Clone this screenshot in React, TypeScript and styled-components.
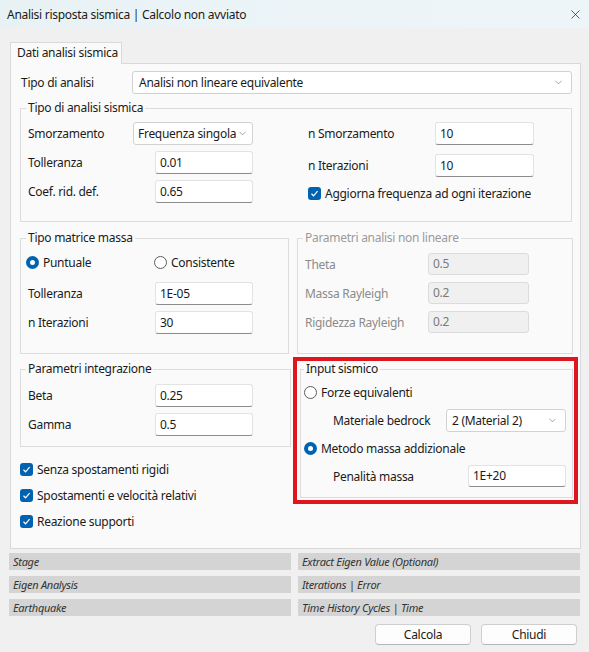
import React from 'react'
import styled, { createGlobalStyle } from 'styled-components'
import { ChevronDown, X } from 'lucide-react'

const GlobalStyle = createGlobalStyle`
    html, body {
        margin: 0;
        padding: 0;
    }
    body {
        font-family: "Noto Sans", "Open Sans", sans-serif;
        font-size: 12px;
        letter-spacing: -0.28px;
        color: #1b1b1b;
    }
    * {
        box-sizing: border-box;
    }
`

const Window = styled.div`
    width: 589px;
    height: 652px;
    background: #f0f0f0;
    display: flex;
    flex-direction: column;
    overflow: hidden;
`

const TitleBar = styled.div`
    height: 28px;
    flex: none;
    display: flex;
    align-items: center;
    justify-content: space-between;
    padding: 0 6px 0 7px;
    background: linear-gradient(90deg, #e8f2f5, #eef5f9);
    color: #1a1a1a;
`

const Body = styled.div`
    padding: 14px 0 0 10px;
    display: flex;
    flex-direction: column;
`

const Tab = styled.div`
    width: 112px;
    height: 22px;
    margin-bottom: -1px;
    position: relative;
    z-index: 1;
    border: 1px solid #d9d9d9;
    border-bottom: none;
    background: #fafafa;
    padding-left: 6px;
    line-height: 20px;
    white-space: nowrap;
`

const Panel = styled.div`
    width: 571px;
    height: 486px;
    border: 1px solid #d9d9d9;
    background: #fafafa;
    padding: 7px 8px 0 9px;
    display: flex;
    flex-direction: column;
`

const Row = styled.div<{ $mt?: number; $ml?: number }>`
    display: flex;
    align-items: center;
    margin-top: ${({ $mt }) => $mt ?? 0}px;
    margin-left: ${({ $ml }) => $ml ?? 0}px;
`

const Label = styled.div<{ $w: number; $disabled?: boolean }>`
    width: ${({ $w }) => $w}px;
    flex: none;
    color: ${({ $disabled }) => ($disabled ? '#8a8a8a' : '#1b1b1b')};
    white-space: nowrap;
`

const Input = styled.div<{ $w: number; $h?: number; $disabled?: boolean }>`
    width: ${({ $w }) => $w}px;
    height: ${({ $h }) => $h ?? 23}px;
    flex: none;
    display: flex;
    align-items: center;
    padding: 0 4px 1px;
    border: 1px solid ${({ $disabled }) => ($disabled ? '#dcdcdc' : '#e3e3e3')};
    border-bottom-color: ${({ $disabled }) => ($disabled ? '#dcdcdc' : '#8c8c8c')};
    border-radius: 3px;
    background: ${({ $disabled }) => ($disabled ? '#f0f0f0' : '#ffffff')};
    color: ${({ $disabled }) => ($disabled ? '#7a7a7a' : '#1b1b1b')};
`

const Combo = styled.div<{ $w?: number }>`
    width: ${({ $w }) => ($w ? `${$w}px` : 'auto')};
    flex: ${({ $w }) => ($w ? 'none' : '1')};
    height: 23px;
    display: flex;
    align-items: center;
    justify-content: space-between;
    padding: 0 4px 0 4px;
    border: 1px solid #d2d2d2;
    border-radius: 3px;
    background: #ffffff;
    white-space: nowrap;
    color: #1b1b1b;

    svg {
        flex: none;
    }
`

const Group = styled.fieldset<{ $pt: number; $pb: number; $pl?: number; $disabled?: boolean }>`
    margin: 0;
    min-width: 0;
    border: 1px solid #dcdcdc;
    padding: ${({ $pt, $pb, $pl }) => `${$pt}px 6px ${$pb}px ${$pl ?? 7}px`};
    display: flex;
    flex-direction: column;

    legend {
        padding: 0 2px;
        margin-left: -2px;
        line-height: 16px;
        color: ${({ $disabled }) => ($disabled ? '#9a9a9a' : '#1b1b1b')};
    }
`

const TwoCols = styled.div`
    display: grid;
    grid-template-columns: 280px 1fr;
`

const Col = styled.div<{ $mt?: number }>`
    display: flex;
    flex-direction: column;
    margin-top: ${({ $mt }) => $mt ?? 0}px;
`

const GroupRow = styled.div<{ $cols: string; $gap: number; $mt: number }>`
    display: grid;
    grid-template-columns: ${({ $cols }) => $cols};
    column-gap: ${({ $gap }) => $gap}px;
    margin-top: ${({ $mt }) => $mt}px;
    align-items: start;
`

const RadioRow = styled.div`
    display: grid;
    grid-template-columns: 128px auto;
    margin-left: -2px;
`

const Option = styled.div<{ $mt?: number }>`
    display: flex;
    align-items: center;
    height: 16px;
    gap: 4px;
    margin-top: ${({ $mt }) => $mt ?? 0}px;
    white-space: nowrap;
`

const RadioDot = styled.span<{ $on?: boolean }>`
    width: 13px;
    height: 13px;
    border-radius: 50%;
    flex: none;
    border: ${({ $on }) => ($on ? '4px solid #0063b1' : '1px solid #5c5c5c')};
    background: #ffffff;
`

const CheckBox = styled.span`
    width: 13px;
    height: 13px;
    flex: none;
    border-radius: 3px;
    background: #0063b1;
    display: flex;
    align-items: center;
    justify-content: center;
`

const RedFrame = styled.div`
    border: 4px solid #e0161e;
    padding: 0 1px 2px 3px;
`

const Bars = styled.div`
    display: grid;
    grid-template-columns: 282px 282px;
    grid-auto-rows: 17px;
    gap: 6px 7px;
    margin: 4px 0 0 -1px;
`

const Bar = styled.div`
    background: #d4d4d4;
    font-style: italic;
    font-size: 11px;
    line-height: 17px;
    padding-left: 4px;
    color: #333333;
`

const Footer = styled.div`
    display: flex;
    justify-content: flex-end;
    gap: 10px;
    margin-top: 8px;
    padding-right: 12px;
`

const Button = styled.button`
    width: 96px;
    height: 21px;
    font: inherit;
    letter-spacing: inherit;
    color: #1b1b1b;
    background: #fdfdfd;
    border: 1px solid #cfcfcf;
    border-bottom-color: #b5b5b5;
    border-radius: 4px;
    padding: 0;
`

const Chevron = () => <ChevronDown size={11} strokeWidth={1.2} color="#5a5a5a" />

const Check = () => (
    <svg width="9" height="9" viewBox="0 0 9 9">
        <path d="M1.5 4.8 L3.6 6.8 L7.6 2.2" fill="none" stroke="#ffffff" strokeWidth="1.2" />
    </svg>
)

const App = () => {
    return (
        <Window>
            <GlobalStyle />
            <TitleBar>
                <span>Analisi risposta sismica | Calcolo non avviato</span>
                <X size={15} strokeWidth={1.1} color="#1a1a1a" />
            </TitleBar>
            <Body>
                <Tab>Dati analisi sismica</Tab>
                <Panel>
                    <Row>
                        <Label $w={112} style={{ paddingLeft: 1 }}>
                            Tipo di analisi
                        </Label>
                        <Combo style={{ paddingLeft: 6, paddingRight: 7 }}>
                            <span>Analisi non lineare equivalente</span>
                            <Chevron />
                        </Combo>
                    </Row>

                    <Group $pt={6} $pb={18} style={{ marginTop: 6 }}>
                        <legend>Tipo di analisi sismica</legend>
                        <TwoCols>
                            <Col>
                                <Row>
                                    <Label $w={105}>Smorzamento</Label>
                                    <Combo $w={120}>
                                        <span>Frequenza singola</span>
                                        <Chevron />
                                    </Combo>
                                </Row>
                                <Row $mt={6}>
                                    <Label $w={127}>Tolleranza</Label>
                                    <Input $w={98}>0.01</Input>
                                </Row>
                                <Row $mt={6}>
                                    <Label $w={127}>Coef. rid. def.</Label>
                                    <Input $w={98}>0.65</Input>
                                </Row>
                            </Col>
                            <Col>
                                <Row>
                                    <Label $w={127}>n Smorzamento</Label>
                                    <Input $w={99}>10</Input>
                                </Row>
                                <Row $mt={9}>
                                    <Label $w={127}>n Iterazioni</Label>
                                    <Input $w={99}>10</Input>
                                </Row>
                                <Option $mt={8}>
                                    <CheckBox>
                                        <Check />
                                    </CheckBox>
                                    Aggiorna frequenza ad ogni iterazione
                                </Option>
                            </Col>
                        </TwoCols>
                    </Group>

                    <GroupRow $cols="269px 276px" $gap={8} $mt={8}>
                        <Group $pt={8} $pb={19}>
                            <legend>Tipo matrice massa</legend>
                            <RadioRow>
                                <Option>
                                    <RadioDot $on />
                                    Puntuale
                                </Option>
                                <Option>
                                    <RadioDot />
                                    Consistente
                                </Option>
                            </RadioRow>
                            <Row $mt={12}>
                                <Label $w={127}>Tolleranza</Label>
                                <Input $w={98}>1E-05</Input>
                            </Row>
                            <Row $mt={6}>
                                <Label $w={127}>n Iterazioni</Label>
                                <Input $w={98}>30</Input>
                            </Row>
                        </Group>
                        <Group $pt={7} $pb={20} $disabled>
                            <legend>Parametri analisi non lineare</legend>
                            <Row>
                                <Label $w={123} $disabled>
                                    Theta
                                </Label>
                                <Input $w={101} $h={22} $disabled>
                                    0.5
                                </Input>
                            </Row>
                            <Row $mt={7}>
                                <Label $w={123} $disabled>
                                    Massa Rayleigh
                                </Label>
                                <Input $w={101} $h={22} $disabled>
                                    0.2
                                </Input>
                            </Row>
                            <Row $mt={7}>
                                <Label $w={123} $disabled>
                                    Rigidezza Rayleigh
                                </Label>
                                <Input $w={101} $h={22} $disabled>
                                    0.2
                                </Input>
                            </Row>
                        </Group>
                    </GroupRow>

                    <GroupRow $cols="271px 285px" $gap={2} $mt={3}>
                        <Col $mt={4}>
                            <Group $pt={7} $pb={10}>
                                <legend>Parametri integrazione</legend>
                                <Row>
                                    <Label $w={127}>Beta</Label>
                                    <Input $w={98}>0.25</Input>
                                </Row>
                                <Row $mt={6}>
                                    <Label $w={127}>Gamma</Label>
                                    <Input $w={98}>0.5</Input>
                                </Row>
                            </Group>
                            <Option $mt={14}>
                                <CheckBox>
                                    <Check />
                                </CheckBox>
                                Senza spostamenti rigidi
                            </Option>
                            <Option $mt={10}>
                                <CheckBox>
                                    <Check />
                                </CheckBox>
                                Spostamenti e velocità relativi
                            </Option>
                            <Option $mt={10}>
                                <CheckBox>
                                    <Check />
                                </CheckBox>
                                Reazione supporti
                            </Option>
                        </Col>
                        <RedFrame>
                            <Group $pt={7} $pb={10} $pl={3}>
                                <legend style={{ marginLeft: 0 }}>Input sismico</legend>
                                <Option>
                                    <RadioDot />
                                    Forze equivalenti
                                </Option>
                                <Row $mt={9} $ml={29}>
                                    <Label $w={113}>Materiale bedrock</Label>
                                    <Combo $w={120} style={{ paddingLeft: 5, paddingRight: 7 }}>
                                        <span>2 (Material 2)</span>
                                        <Chevron />
                                    </Combo>
                                </Row>
                                <Option $mt={8}>
                                    <RadioDot $on />
                                    Metodo massa addizionale
                                </Option>
                                <Row $mt={9} $ml={29}>
                                    <Label $w={135}>Penalità massa</Label>
                                    <Input $w={98} $h={22}>
                                        1E+20
                                    </Input>
                                </Row>
                            </Group>
                        </RedFrame>
                    </GroupRow>
                </Panel>

                <Bars>
                    <Bar>Stage</Bar>
                    <Bar>Extract Eigen Value (Optional)</Bar>
                    <Bar>Eigen Analysis</Bar>
                    <Bar>Iterations | Error</Bar>
                    <Bar>Earthquake</Bar>
                    <Bar>Time History Cycles | Time</Bar>
                </Bars>
            </Body>
            <Footer>
                <Button>Calcola</Button>
                <Button>Chiudi</Button>
            </Footer>
        </Window>
    )
}

export default App
